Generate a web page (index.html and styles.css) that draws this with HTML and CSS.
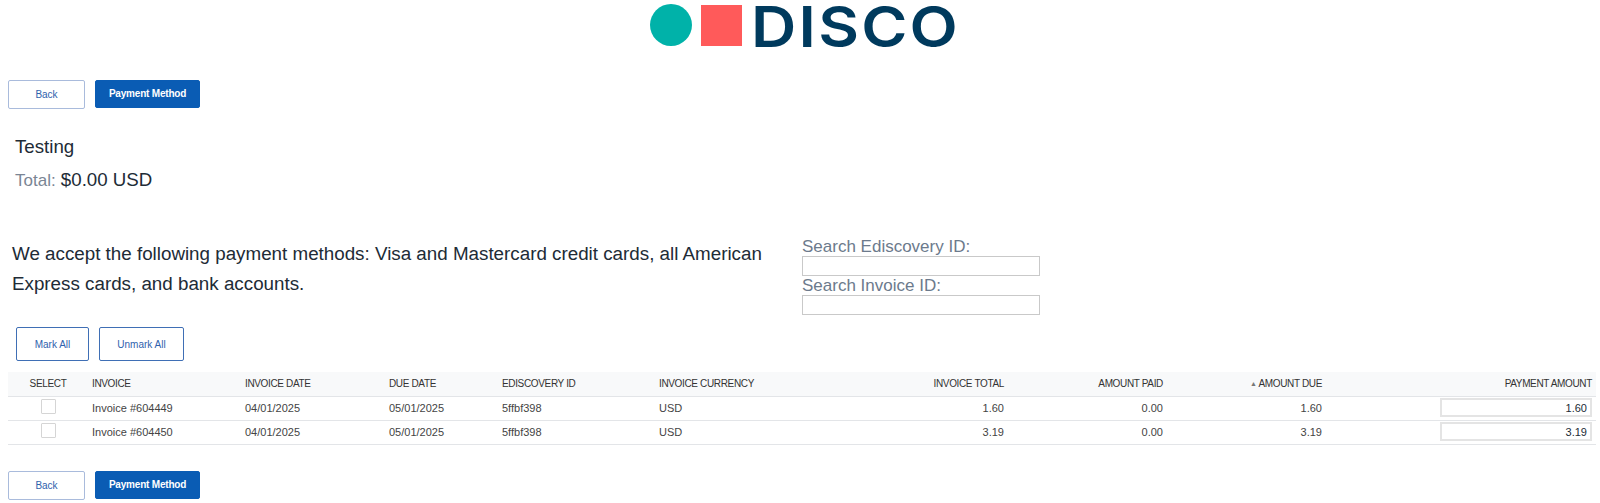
FILE: index.html
```html
<!DOCTYPE html>
<html lang="en">
<head>
    <meta charset="UTF-8">
    <meta name="viewport" content="width=device-width, initial-scale=1.0">
    <title>Payment</title>
    <link rel="stylesheet" href="styles.css">
</head>
<body>
    <header class="logo">
        <span class="logo-circle"></span>
        <span class="logo-square"></span>
        <span class="logo-text">DISCO</span>
    </header>

    <div class="actions">
        <button class="btn btn-back">Back</button>
        <button class="btn btn-primary">Payment Method</button>
    </div>

    <div class="summary">
        <div class="summary-name">Testing</div>
        <div class="summary-total"><span class="summary-label">Total:</span> $0.00 USD</div>
    </div>

    <div class="info">
        <p class="info-text">We accept the following payment methods: Visa and Mastercard credit cards, all American Express cards, and bank accounts.</p>
        <div class="search">
            <label class="search-label" for="ediscovery">Search Ediscovery ID:</label>
            <input class="search-input" id="ediscovery" type="text">
            <label class="search-label" for="invoice">Search Invoice ID:</label>
            <input class="search-input" id="invoice" type="text">
        </div>
    </div>

    <div class="mark-actions">
        <button class="btn btn-outline btn-mark">Mark All</button>
        <button class="btn btn-outline btn-unmark">Unmark All</button>
    </div>

    <table class="invoices">
        <colgroup>
            <col class="col-select">
            <col class="col-invoice">
            <col class="col-date">
            <col class="col-due">
            <col class="col-id">
            <col class="col-currency">
            <col class="col-total">
            <col class="col-paid">
            <col class="col-amount">
            <col class="col-payment">
        </colgroup>
        <thead>
            <tr>
                <th class="center">SELECT</th>
                <th>INVOICE</th>
                <th>INVOICE DATE</th>
                <th>DUE DATE</th>
                <th>EDISCOVERY ID</th>
                <th>INVOICE CURRENCY</th>
                <th class="right">INVOICE TOTAL</th>
                <th class="right">AMOUNT PAID</th>
                <th class="right"><span class="sort-arrow">&#9650;</span> AMOUNT DUE</th>
                <th class="right">PAYMENT AMOUNT</th>
            </tr>
        </thead>
        <tbody>
            <tr>
                <td class="center"><span class="check"></span></td>
                <td>Invoice #604449</td>
                <td>04/01/2025</td>
                <td>05/01/2025</td>
                <td>5ffbf398</td>
                <td>USD</td>
                <td class="right">1.60</td>
                <td class="right">0.00</td>
                <td class="right">1.60</td>
                <td class="right"><input class="pay-input" type="text" value="1.60"></td>
            </tr>
            <tr>
                <td class="center"><span class="check"></span></td>
                <td>Invoice #604450</td>
                <td>04/01/2025</td>
                <td>05/01/2025</td>
                <td>5ffbf398</td>
                <td>USD</td>
                <td class="right">3.19</td>
                <td class="right">0.00</td>
                <td class="right">3.19</td>
                <td class="right"><input class="pay-input" type="text" value="3.19"></td>
            </tr>
        </tbody>
    </table>

    <div class="actions actions-bottom">
        <button class="btn btn-back">Back</button>
        <button class="btn btn-primary">Payment Method</button>
    </div>
</body>
</html>
```

FILE: styles.css
```css
body {
    font-family: 'Liberation Sans', Arial, sans-serif;
    margin: 0;
    padding: 0;
    color: #212b36;
    background-color: #fff;
    overflow: hidden;
}

.logo {
    display: flex;
    justify-content: center;
    align-items: center;
    height: 50px;
    padding-left: 12px;
    gap: 8px;
}

.logo-circle {
    width: 42px;
    height: 42px;
    margin-right: 1px;
    border-radius: 50%;
    background-color: #00b2a9;
}

.logo-square {
    width: 41px;
    height: 41px;
    background-color: #ff5a5a;
}

/* the wordmark is wider than any installed face, hence the scaleX */
.logo-text {
    font-family: 'Inter', sans-serif;
    font-weight: 600;
    font-size: 56px;
    line-height: 50px;
    letter-spacing: 2px;
    color: #003a5d;
    margin: 4px 25px 0 1px;
    transform: scaleX(1.12);
    transform-origin: left center;
}

.actions {
    display: flex;
    gap: 10px;
    align-items: flex-start;
    padding: 30px 0 0 8px;
}

.btn {
    font-family: inherit;
    font-size: 10px;
    border-radius: 2px;
    background-color: #fff;
    color: #2f62ad;
    cursor: pointer;
    padding: 0 0 1px;
}

.btn-back {
    width: 77px;
    height: 29px;
    border: 1px solid #a9bbdc;
}

.btn-primary {
    width: 105px;
    height: 28px;
    border: 1px solid #0a5cb4;
    background-color: #0a5cb4;
    color: #fff;
    font-weight: bold;
    letter-spacing: -0.2px;
}

.summary {
    padding: 27px 0 0 15px;
}

.summary-name {
    font-size: 18.72px;
    line-height: 21px;
}

.summary-total {
    font-size: 18.72px;
    line-height: 21px;
    margin-top: 12px;
}

.summary-label {
    font-size: 17px;
    color: #7a8594;
}

.info {
    display: flex;
    padding: 48px 0 0 12px;
}

.info-text {
    width: 770px;
    margin: 0;
    font-size: 18.8px;
    line-height: 30px;
    flex-shrink: 0;
}

.search {
    display: flex;
    flex-direction: column;
    margin: -1px 0 0 20px;
    width: 238px;
}

.search-label {
    font-size: 17px;
    line-height: 18px;
    color: #6c7a8c;
}

.search-input {
    box-sizing: border-box;
    width: 100%;
    height: 20px;
    margin: 0 0 1px;
    border: 1px solid #c9c9c9;
    padding: 0;
}

.mark-actions {
    display: flex;
    gap: 10px;
    padding: 11px 0 0 16px;
}

.btn-outline {
    height: 34px;
    padding: 0;
    border: 1px solid #3f6fb5;
}

.btn-mark {
    width: 73px;
}

.btn-unmark {
    width: 85px;
}

.invoices {
    border-collapse: collapse;
    table-layout: fixed;
    width: 1588px;
    margin: 11px 0 0 8px;
    font-size: 11px;
    color: #444;
}

.col-select { width: 80px; }
.col-invoice { width: 153px; }
.col-date { width: 144px; }
.col-due { width: 113px; }
.col-id { width: 157px; }
.col-currency { width: 200px; }
.col-total { width: 153px; }
.col-paid { width: 159px; }
.col-amount { width: 159px; }
.col-payment { width: 270px; }

.invoices th {
    height: 22px;
    padding: 0 4px 2px;
    background-color: #f8f9fa;
    border-bottom: 1px solid #e3e5e8;
    font-size: 10px;
    letter-spacing: -0.35px;
    font-weight: normal;
    color: #333;
    text-align: left;
}

.invoices td {
    height: 21px;
    padding: 0 4px 2px;
    border-bottom: 1px solid #e3e5e8;
}

.invoices .center {
    text-align: center;
}

.invoices .right {
    text-align: right;
}

.sort-arrow {
    font-size: 7px;
    color: #777;
    vertical-align: 1px;
}

.check {
    display: inline-block;
    box-sizing: border-box;
    width: 15px;
    height: 15px;
    border: 1px solid #d5d5d5;
    border-radius: 1px;
    vertical-align: middle;
    margin-top: -3px;
}

.pay-input {
    box-sizing: border-box;
    width: 152px;
    height: 19px;
    margin: 0;
    border: 2px solid #e4e4e4;
    padding: 0 3px;
    font-family: inherit;
    font-size: 11px;
    color: #212b36;
    text-align: right;
    vertical-align: middle;
}

.actions-bottom {
    padding-top: 26px;
}
```
